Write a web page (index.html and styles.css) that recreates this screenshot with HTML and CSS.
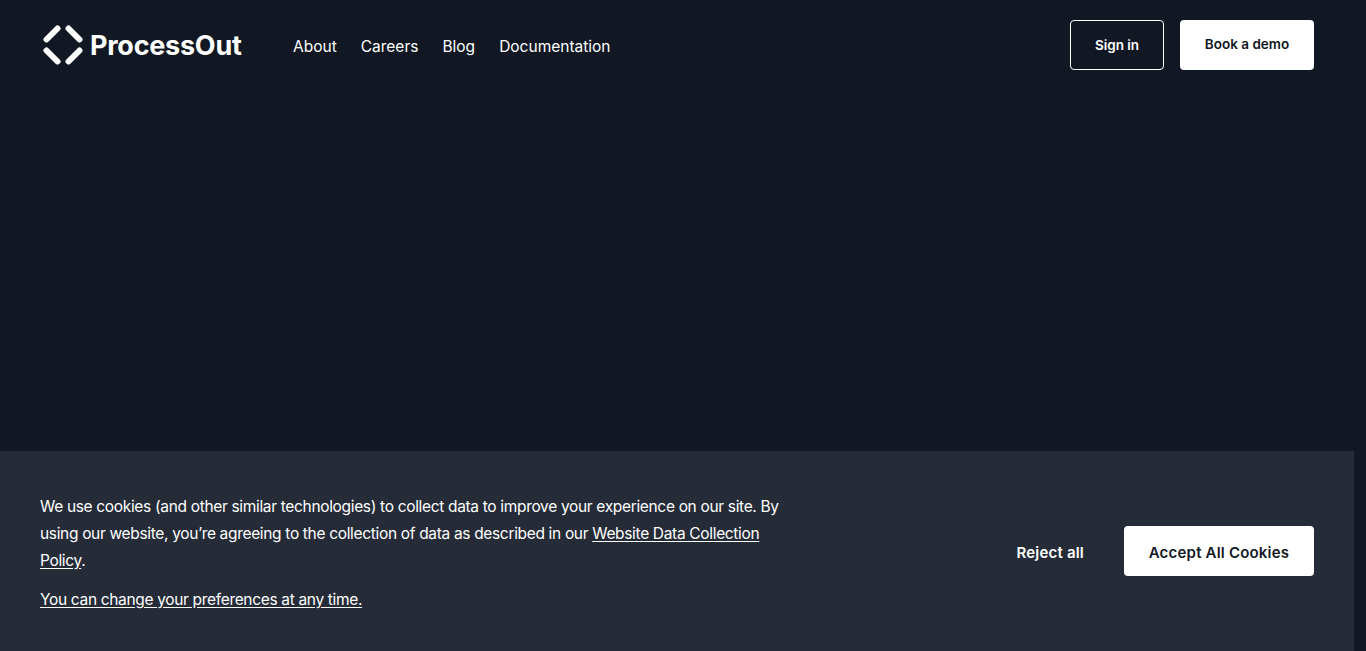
FILE: index.html
```html
<!DOCTYPE html>
<html lang="en">
  <head>
    <meta charset="UTF-8" />
    <meta name="viewport" content="width=device-width, initial-scale=1.0" />
    <title>ProcessOut</title>
    <link rel="stylesheet" href="styles.css">
  </head>
  <body>
    <div id="root">
      <header class="site-header">
        <a class="logo" href="#">
          <svg class="logo-icon" width="40" height="40" viewBox="0 0 40 40" fill="none" stroke="#FFFFFF" stroke-width="6" stroke-linecap="round">
            <path d="M3.5 14.5L14.5 3.5" />
            <path d="M25.5 3.5L36.5 14.5" />
            <path d="M3.5 25.5L14.5 36.5" />
            <path d="M25.5 36.5L36.5 25.5" />
          </svg>
          <span class="logo-text">ProcessOut</span>
        </a>
        <nav class="main-nav">
          <a href="#">About</a>
          <a href="#">Careers</a>
          <a href="#">Blog</a>
          <a href="#">Documentation</a>
        </nav>
        <div class="header-actions">
          <a class="button button-outline" href="#">Sign in</a>
          <a class="button button-white" href="#">Book a demo</a>
        </div>
      </header>
    </div>

    <section class="cookie-banner">
      <div class="cookie-text">
        <p>We use cookies (and other similar technologies) to collect data to improve your experience on our site. By using our website, you’re agreeing to the collection of data as described in our <a href="#">Website Data Collection Policy</a>.</p>
        <p><a href="#">You can change your preferences at any time.</a></p>
      </div>
      <div class="cookie-actions">
        <button type="button" class="cookie-reject">Reject all</button>
        <button type="button" class="cookie-accept">Accept All Cookies</button>
      </div>
    </section>
  </body>
</html>
```

FILE: styles.css
```css
:root {
  font-family: Inter, "Noto Sans", Arial, sans-serif;
  font-size: 16px;
  color: #FFFFFF;
}

body {
  margin: 0;
  height: 651px;
  overflow: hidden;
  background: #111823;
}

a {
  color: inherit;
  text-decoration: none;
}

#root {
  width: 1354px;
}

.site-header {
  display: flex;
  align-items: center;
  padding: 20px 40px 0 43px;
}

.logo {
  display: flex;
  align-items: center;
  gap: 7px;
  width: 250px;
}

.logo-icon {
  display: block;
}

.logo-text {
  padding-top: 2px;
  font-size: 27px;
  font-weight: 700;
  letter-spacing: -0.25px;
  line-height: 48px;
}

.main-nav {
  display: flex;
  column-gap: 24px;
  padding-top: 4px;
  font-size: 15.5px;
  line-height: 46px;
}

.header-actions {
  display: flex;
  column-gap: 16px;
  margin-left: auto;
}

.button {
  box-sizing: border-box;
  display: flex;
  align-items: center;
  justify-content: center;
  height: 50px;
  border-radius: 4px;
  font-size: 13.5px;
  font-weight: 600;
}

.button-outline {
  width: 94px;
  border: 1px solid #FFFFFF;
}

.button-white {
  width: 134px;
  padding-bottom: 2px;
  background: #FFFFFF;
  color: #111823;
}

.cookie-banner {
  position: fixed;
  left: 0;
  bottom: 0;
  box-sizing: border-box;
  width: 1354px;
  height: 200px;
  padding: 42px 40px 0;
  display: flex;
  justify-content: space-between;
  background: #252C38;
}

.cookie-text {
  width: 750px;
  font-size: 15.5px;
  line-height: 27px;
  letter-spacing: -0.33px;
}

.cookie-text p {
  margin: 0 0 12px;
}

.cookie-text a {
  text-decoration: underline;
  text-underline-offset: 2px;
}

.cookie-actions {
  display: flex;
  align-items: center;
  align-self: flex-start;
  column-gap: 40px;
  margin-top: 33px;
}

.cookie-actions button {
  border: none;
  padding: 2px 0 0;
  font-family: inherit;
  font-size: 15px;
  font-weight: 600;
  letter-spacing: 0.2px;
  cursor: pointer;
}

.cookie-reject {
  background: none;
  color: #FFFFFF;
}

.cookie-accept {
  width: 190px;
  height: 50px;
  border-radius: 4px;
  background: #FFFFFF;
  color: #111823;
}
```
